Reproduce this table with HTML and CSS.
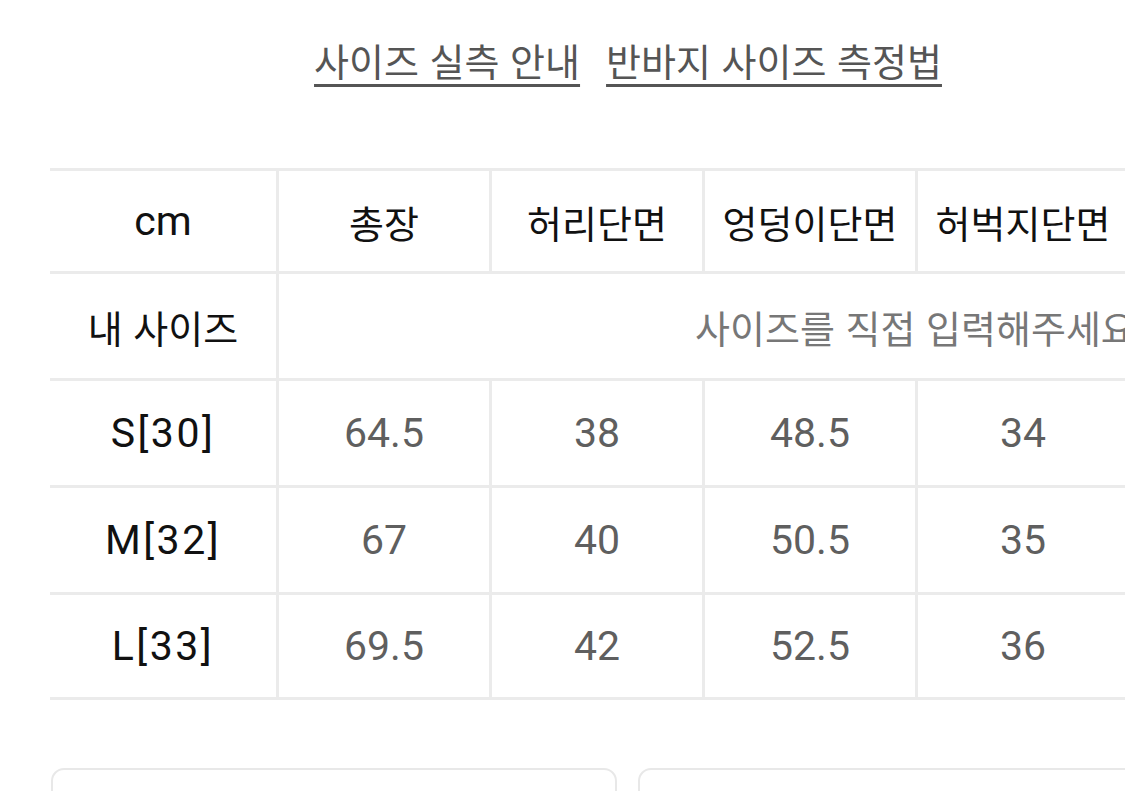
FILE: index.html
```html
<!DOCTYPE html>
<html lang="ko">
<head>
<meta charset="utf-8">
<title>사이즈 실측 안내</title>
<link rel="stylesheet" href="styles.css">
</head>
<body>
<div class="page">
  <nav class="links">
    <a class="link" href="#">사이즈 실측 안내</a>
    <a class="link" href="#">반바지 사이즈 측정법</a>
  </nav>

  <div class="size-table">
    <div class="cell head latin">cm</div>
    <div class="cell head ko">총장</div>
    <div class="cell head ko">허리단면</div>
    <div class="cell head ko">엉덩이단면</div>
    <div class="cell head ko">허벅지단면</div>

    <div class="cell head ko">내 사이즈</div>
    <div class="cell placeholder ko">사이즈를 직접 입력해주세요</div>

    <div class="cell head latin label">S[30]</div>
    <div class="cell val">64.5</div>
    <div class="cell val">38</div>
    <div class="cell val">48.5</div>
    <div class="cell val">34</div>

    <div class="cell head latin label">M[32]</div>
    <div class="cell val">67</div>
    <div class="cell val">40</div>
    <div class="cell val">50.5</div>
    <div class="cell val">35</div>

    <div class="cell head latin label">L[33]</div>
    <div class="cell val">69.5</div>
    <div class="cell val">42</div>
    <div class="cell val">52.5</div>
    <div class="cell val">36</div>
  </div>

  <div class="cards">
    <div class="card"></div>
    <div class="card"></div>
  </div>
</div>
</body>
</html>
```

FILE: styles.css
```css
html, body {
  margin: 0;
  padding: 0;
  background: #ffffff;
  overflow: hidden;
}

body {
  font-family: Roboto, "Liberation Sans", "Noto Sans CJK KR", sans-serif;
  color: #111111;
}

.page {
  width: 1256px;
  height: 791px;
}

.links {
  display: flex;
  justify-content: center;
  gap: 26px;
  padding-top: 36px;
  height: 60px;
}

.link {
  font-family: "Noto Sans CJK KR", sans-serif;
  font-size: 38px;
  line-height: 48px;
  color: #555555;
  text-decoration: underline;
  text-decoration-thickness: 3px;
  text-underline-offset: 8px;
}

.size-table {
  margin-top: 72px;
  margin-left: 50px;
  display: grid;
  grid-template-columns: 226px repeat(4, 210px);
  grid-template-rows: 100px 104px 104px 104px 102px;
  gap: 3px;
  padding: 3px 0;
  background: #ebebeb;
  width: 1090px;
}

.cell {
  background: #ffffff;
  display: flex;
  align-items: center;
  justify-content: center;
  white-space: nowrap;
  overflow: hidden;
}

.latin {
  font-family: Roboto, "Liberation Sans", sans-serif;
  font-size: 41px;
  color: #111111;
}

.label {
  letter-spacing: 2.5px;
}

.ko {
  font-family: "Noto Sans CJK KR", sans-serif;
  font-size: 38px;
  color: #111111;
}

.placeholder {
  grid-column: 2 / -1;
  justify-content: flex-start;
  padding-left: 416px;
  color: #777777;
}

.val {
  font-family: Roboto, "Liberation Sans", sans-serif;
  font-size: 41px;
  color: #5f5f5f;
}

.cards {
  display: flex;
  gap: 21px;
  margin-top: 68px;
  margin-left: 51px;
}

.card {
  flex: 0 0 566px;
  height: 120px;
  border: 2px solid #e8e8e8;
  border-radius: 13px;
  box-sizing: border-box;
}
```
